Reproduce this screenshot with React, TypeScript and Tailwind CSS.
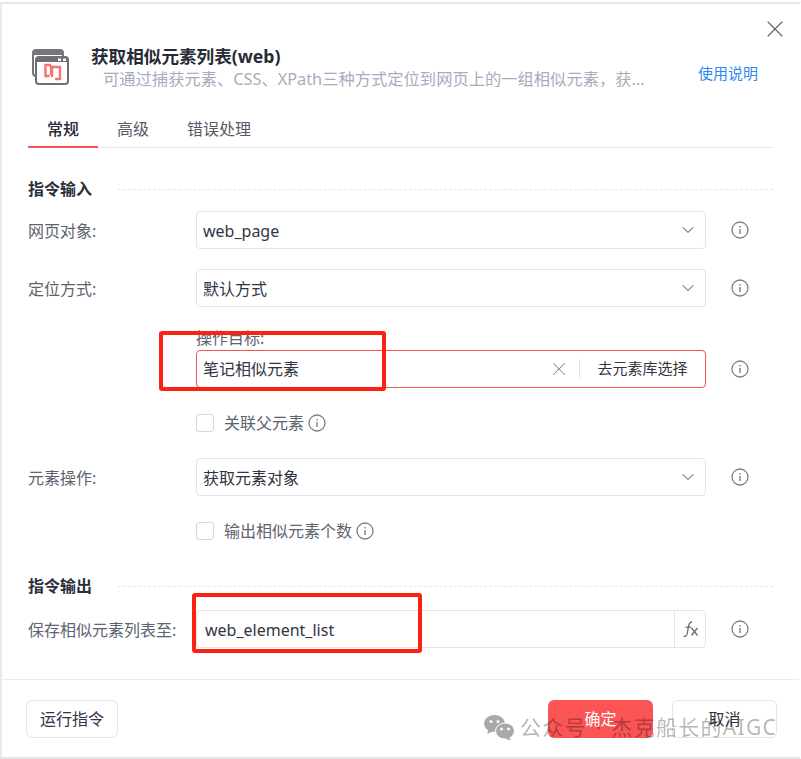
import React from "react";
import { ChevronDown, X } from "lucide-react";

const InfoIcon = ({ size = 18 }: { size?: number }) => (
  <svg width={size} height={size} viewBox="0 0 18 18" fill="none" className="shrink-0 text-[#7b7f89]">
    <circle cx="9" cy="9" r="8" stroke="currentColor" strokeWidth="1.3" />
    <path d="M9 8v5M9 5v1.4" stroke="currentColor" strokeWidth="1.4" />
  </svg>
);

const Label = ({ children }: { children?: React.ReactNode }) => (
  <div className="w-[168px] shrink-0 pt-[2px] text-[16px] text-[#5c6470]">{children}</div>
);

function SelectRow({ label, value, className }: { label: string; value: string; className?: string }) {
  return (
    <div className={`flex items-center ${className ?? ""}`}>
      <Label>{label}</Label>
      <div className="flex h-[38px] w-[510px] items-center justify-between rounded border border-[#e3e4ea] pl-[6px] pr-[7px] text-[16px] text-[#2f3542]">
        <span className="pt-[2px]">{value}</span>
        <ChevronDown size={20} strokeWidth={1.2} className="text-[#3f4552]" />
      </div>
      <div className="ml-[25px]">
        <InfoIcon />
      </div>
    </div>
  );
}

function CheckRow({ label, className }: { label: string; className?: string }) {
  return (
    <div className={`ml-[168px] flex items-center ${className ?? ""}`}>
      <div className="h-[18px] w-[18px] rounded-[3px] border border-[#d5d7df]" />
      <span className="ml-[10px] mr-[4px] text-[16px] leading-[22px] text-[#5c6470]">{label}</span>
      <InfoIcon />
    </div>
  );
}

function SectionTitle({ title, className }: { title: string; className?: string }) {
  return (
    <div className={`flex items-center ${className ?? ""}`}>
      <span className="w-[90px] shrink-0 text-[16px] font-bold leading-[22px] text-[#2a2f3a]">{title}</span>
      <div className="h-0 flex-1 border-t border-dashed border-[#e6e7eb]" />
    </div>
  );
}

export default function App() {
  return (
    <div
      className="relative h-[759px] w-[801px] overflow-hidden bg-white"
      style={{ fontFamily: '"Noto Sans", "Noto Sans CJK SC", sans-serif' }}
    >
      <div className="mt-[2px] flex h-[757px] flex-col border-x-2 border-y-2 border-x-[#e9eaee] border-y-[#e6e6e8] border-r-white">
        <div className="flex h-[676px] flex-col border-b border-[#ebecef] pl-[26px] pr-[26px]">
          {/* header */}
          <div className="flex justify-end pt-[11px]">
            <X size={28} strokeWidth={1} className="mr-[-16px] text-[#666]" />
          </div>
          <div className="mt-[3px] flex">
            <svg width="37" height="36" viewBox="0 0 37 36" className="ml-[4px] mt-[3px] shrink-0">
              <rect x="1" y="1" width="30" height="26" rx="3" fill="#fff" stroke="#75757c" strokeWidth="2" />
              <rect x="1" y="1" width="30" height="5" fill="#75757c" />
              <rect x="4" y="8" width="32" height="27" rx="3" fill="#fff" stroke="#6e6e76" strokeWidth="2" />
              <rect x="4" y="8" width="32" height="5" fill="#6e6e76" />
              <rect x="26" y="9.5" width="3" height="2.5" fill="#fff" />
              <rect x="31" y="9.5" width="3" height="2.5" fill="#fff" />
              <path d="M19 16h-5.500v11h4M19 16v10M20 18h8v12h-5M20 18v10" fill="none" stroke="#f27572" strokeWidth="2.4" />
            </svg>
            <div className="ml-[22px] mt-[-1px] w-[560px]">
              <div className="text-[17.6px] font-bold leading-[22px] text-[#262b36]">获取相似元素列表(web)</div>
              <div className="ml-[12px] mt-[1px] truncate text-[16.3px] leading-[22px] text-[#a6adbd]">
                可通过捕获元素、CSS、XPath三种方式定位到网页上的一组相似元素，获...
              </div>
            </div>
            <a className="ml-[47px] mt-[16px] whitespace-nowrap text-[15px] leading-[22px] text-[#2f88f0]">使用说明</a>
          </div>

          {/* tabs */}
          <div className="mt-[26px] flex h-[32px] border-b border-[#ebecef] text-[16px] leading-[24px] text-[#555b66]">
            <div className="h-[32px] w-[70px] border-b-2 border-[#f95151] pt-[1px] text-center font-medium text-[#262b36]">常规</div>
            <div className="ml-[19px] pt-[1px]">高级</div>
            <div className="ml-[38px] pt-[1px]">错误处理</div>
          </div>

          <SectionTitle title="指令输入" className="mt-[30px]" />
          <SelectRow label="网页对象:" value="web_page" className="mt-[11px]" />
          <SelectRow label="定位方式:" value="默认方式" className="mt-[20px]" />

          {/* target */}
          <div className="ml-[168px] mt-[19px] text-[16px] leading-[24px] text-[#5c6470]">操作目标:</div>
          <div className="flex items-center">
            <div className="ml-[168px] flex h-[38px] w-[510px] items-center rounded border border-[#f95151] pl-[6px] text-[16px] text-[#2f3542]">
              <span className="flex-1">笔记相似元素</span>
              <X size={22} strokeWidth={1.1} className="text-[#8a8e96]" />
              <div className="ml-[9px] h-[20px] w-px bg-[#e3e4ea]" />
              <span className="w-[125px] pb-[2px] text-center text-[15px]">去元素库选择</span>
            </div>
            <div className="ml-[25px]">
              <InfoIcon />
            </div>
          </div>

          <CheckRow label="关联父元素" className="mt-[24px]" />
          <SelectRow label="元素操作:" value="获取元素对象" className="mt-[24px]" />
          <CheckRow label="输出相似元素个数" className="mt-[24px]" />

          <SectionTitle title="指令输出" className="mt-[33px]" />
          <div className="mt-[13px] flex items-center">
            <Label>保存相似元素列表至:</Label>
            <div className="flex h-[38px] w-[510px] items-center rounded border border-[#e3e4ea] pl-[8px] text-[16px] text-[#2f3542]">
              <span className="flex-1 pt-[2px]">web_element_list</span>
              <div className="flex h-full w-[31px] items-center justify-center border-l border-[#e3e4ea]">
                <svg width="20" height="20" viewBox="0 0 20 20" fill="none" stroke="#6a6d74" strokeWidth="1.3">
                  <path d="M12 3C9.700 3 9.100 4.500 8.600 7L7.200 14.500C6.700 17 5.700 17.800 3.500 17.200" />
                  <path d="M5.500 8.200H11.200" />
                  <path d="M11.500 9l6 7.500M17.500 9l-6 7.500" />
                </svg>
              </div>
            </div>
            <div className="ml-[25px]">
              <InfoIcon />
            </div>
          </div>
        </div>

        {/* footer */}
        <div className="flex items-start justify-between pl-[24px] pr-[22px] pt-[20px] text-[16px]">
          <button className="h-[38px] w-[92px] rounded-md border border-[#e3e4ea] text-[#2f3542]">运行指令</button>
          <div className="flex gap-[19px]">
            <button className="h-[38px] w-[105px] rounded-md bg-[#fb5454] text-white">确定</button>
            <button className="h-[38px] w-[105px] rounded-md border border-[#e3e4ea] text-[#2f3542]">取消</button>
          </div>
        </div>
      </div>

      {/* red annotation boxes drawn over the screenshot */}
      <div className="absolute left-[159px] top-[331px] h-[60px] w-[227px] rounded-[3px] border-[4px] border-[#fb2113]" />
      <div className="absolute left-[192px] top-[593px] h-[60px] w-[230px] rounded-[3px] border-[4px] border-[#fb2113]" />

      {/* watermark */}
      <div className="absolute left-[484px] top-[712px] flex items-center gap-[6px] text-[21px] leading-[30px] tracking-[1.3px] text-black/30 [word-spacing:2px]">
        <svg width="30" height="27" viewBox="0 0 30 27" className="shrink-0">
          <ellipse cx="10.500" cy="9.500" rx="10.500" ry="8.500" fill="#a9a9a9" />
          <path d="M4 15l-.5 5 5.500-3z" fill="#a9a9a9" />
          <circle cx="7" cy="7.500" r="1.500" fill="#fff" />
          <circle cx="14" cy="7.500" r="1.500" fill="#fff" />
          <ellipse cx="21" cy="17" rx="9.500" ry="8" fill="#a9a9a9" stroke="#fff" strokeWidth="1" />
          <path d="M25 23l2 3.500-6-2z" fill="#a9a9a9" />
          <circle cx="17.500" cy="15" r="1.500" fill="#fff" />
          <circle cx="24.500" cy="15" r="1.500" fill="#fff" />
        </svg>
        <span className="whitespace-nowrap">公众号 · 杰克船长的AIGC</span>
      </div>
    </div>
  );
}
